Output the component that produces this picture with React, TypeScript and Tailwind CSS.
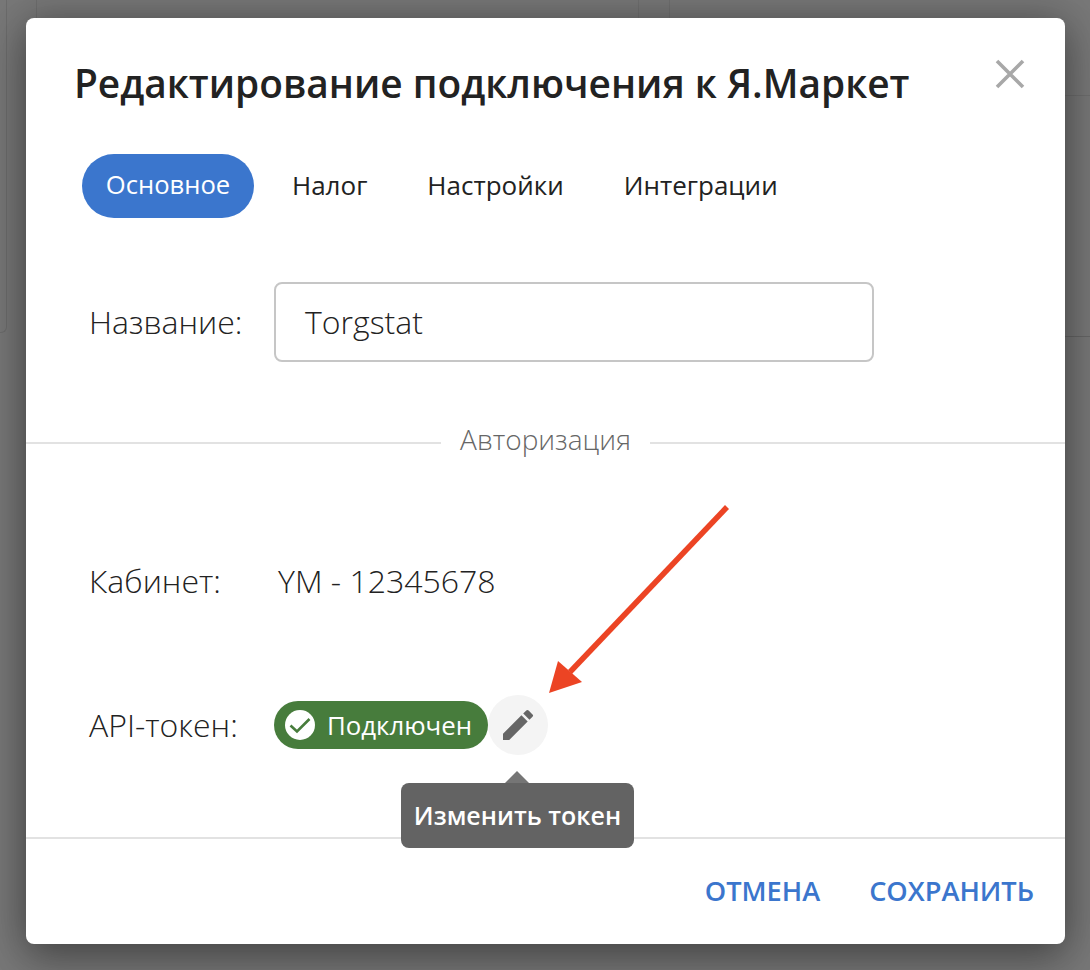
import React from "react";

const Tab = ({ children, active }: { children: React.ReactNode; active?: boolean }) => (
  <div className={`flex h-16 items-center rounded-full pb-[1px] ${active ? "mr-[2px] w-[172px] justify-center bg-[#3b76cd] text-[25.6px] text-white" : "px-6 text-[26px] text-[#222]"}`}>
    {children}
  </div>
);

export default function App() {
  return (
    <div className="relative h-[970px] w-[1090px] overflow-hidden bg-[#787878] font-['Open_Sans','Noto_Sans',sans-serif]">
      {/* dimmed page behind the dialog */}
      <div className="absolute left-[-20px] top-[-20px] h-[353px] w-[27px] rounded-br-md border-b border-r border-[#6c6c6c]" />
      <div className="absolute left-[36px] top-0 h-[18px] w-px bg-[#6e6e6e]" />
      <div className="absolute left-[638px] top-0 h-[18px] w-px bg-[#707070]" />
      <div className="absolute left-[669px] top-0 h-[18px] w-px bg-[#707070]" />
      <div className="absolute left-[1065px] top-[95px] h-px w-[25px] bg-[#6e6e6e]" />
      <div className="absolute left-[1065px] top-[336px] h-px w-[25px] bg-[#666]" />

      {/* dialog */}
      <div className="absolute left-[26px] top-[18px] flex h-[926px] w-[1039px] flex-col rounded-[8px] bg-white shadow-[0_0_40px_rgba(0,0,0,0.3),0_20px_40px_rgba(0,0,0,0.25)]">
        <div className="flex items-start justify-between pl-[48px] pr-[40px] pt-[38px]">
          <h1 className="text-[38.85px] font-semibold leading-[54px] text-[#222]">Редактирование подключения к Я.Маркет</h1>
          <svg width="30" height="30" viewBox="0 0 30 30" className="mt-[3px] text-[#a8a8a8]">
            <path d="M2 2 L28 28 M28 2 L2 28" stroke="currentColor" strokeWidth="3.6" fill="none" />
          </svg>
        </div>

        <div className="mt-[44px] flex items-center gap-[12px] pl-[56px]">
          <Tab active>Основное</Tab>
          <Tab>Налог</Tab>
          <Tab>Настройки</Tab>
          <Tab>Интеграции</Tab>
        </div>

        <div className="mt-[64px] flex items-center pl-[63px]">
          <div className="w-[185px] text-[32px] font-light text-[#222]">Название:</div>
          <div className="flex h-[80px] w-[600px] items-center rounded-[8px] border-2 border-[#c6c6c6] pl-[29px] text-[32px] font-light text-[#222]">
            Torgstat
          </div>
        </div>

        <div className="mt-[58px] flex h-[38px] items-start">
          <div className="mt-[22px] h-[2px] flex-1 bg-[#e2e2e2]" />
          <div className="px-[19px] text-[28px] font-light leading-[38px] text-[#666]">Авторизация</div>
          <div className="mt-[22px] h-[2px] flex-1 bg-[#e2e2e2]" />
        </div>

        <div className="mt-[99px] flex items-center pl-[63px]">
          <div className="w-[189px] text-[32px] font-light text-[#222]">Кабинет:</div>
          <div className="text-[32px] font-light text-[#222]">YM - 12345678</div>
        </div>

        <div className="relative mt-[90px] flex items-center pl-[63px]">
          <div className="w-[185px] text-[32px] font-light text-[#222]">API-токен:</div>
          <div className="flex h-[48px] w-[214px] items-center gap-[12px] rounded-full bg-[#477c3c] pl-[11px] text-[25.8px] text-white">
            <svg width="30" height="30" viewBox="0 0 30 30">
              <circle cx="15" cy="15" r="15" fill="#fff" />
              <path d="M5.5 15.5 L12 21.5 L24.5 9" stroke="#477c3c" strokeWidth="2.6" fill="none" />
            </svg>
            Подключен
          </div>
          <div className="flex h-[60px] w-[60px] items-center justify-center rounded-full bg-[#f4f4f4]">
            <svg width="40" height="40" viewBox="0 0 24 24" fill="#666">
              <path d="M3 17.25V21h3.75L17.81 9.94l-3.75-3.75L3 17.25zM20.71 7.04a1 1 0 0 0 0-1.41l-2.34-2.34a1 1 0 0 0-1.41 0l-1.83 1.83 3.75 3.75 1.83-1.83z" />
            </svg>
          </div>
          <div className="absolute left-[375px] top-[88px] z-10 flex h-[65px] w-[233px] items-center justify-center rounded-[8px] bg-[#636363] text-[25px] font-semibold text-white">
            <div className="absolute left-[104px] top-[-12px] h-0 w-0 border-x-[12px] border-b-[12px] border-x-transparent border-b-[#757575]" />
            Изменить токен
          </div>
        </div>

        <div className="mt-[82px] h-[2px] bg-[#e2e2e2]" />

        <div className="flex flex-1 items-center justify-end gap-[49px] pr-[31px] text-[27.2px] font-semibold text-[#3b76cd]">
          <span>ОТМЕНА</span>
          <span>СОХРАНИТЬ</span>
        </div>
      </div>

      {/* annotation arrow */}
      <svg className="absolute left-[540px] top-[500px]" width="200" height="200" viewBox="0 0 200 200">
        <path d="M187 7 L30 172" stroke="#ec4424" strokeWidth="5.5" fill="none" />
        <path d="M9 193 L18 161 L42 182 Z" fill="#ec4424" />
      </svg>
    </div>
  );
}
